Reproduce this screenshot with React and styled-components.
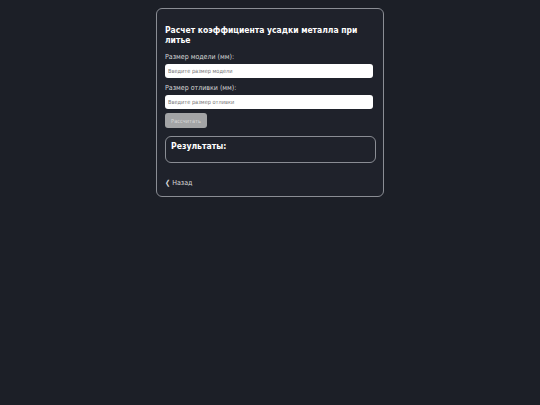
import React, { useState } from 'react';
import styled, { createGlobalStyle } from 'styled-components';

const GlobalStyle = createGlobalStyle`
  body {
    margin: 0;
    background: #1c1f27;
    font-family: "DejaVu Sans Condensed", "DejaVu Sans", sans-serif;
    color: #ffffff;
  }
`;

const Page = styled.div({
  'padding-top': '8px',
  'min-height': '405px',
  'box-sizing': 'border-box',
});

const Card = styled.div({
  'width': '228px',
  'margin': '0 auto',
  'box-sizing': 'border-box',
  'border': '1px solid #8a8d94',
  'border-radius': '6px',
  'background': '#1f222b',
  'padding': '16px 9px 7px 8px',
});

const Title = styled.h2({
  'font-size': '8.5px',
  'font-weight': 'bold',
  'line-height': '10px',
  'margin': '0 0 8px 0',
});

const Label = styled.label({
  'display': 'block',
  'font-size': '7px',
  'line-height': '8px',
  'margin-bottom': '3px',
  'color': '#d8d8d8',
});

const Input = styled.input({
  'display': 'block',
  'width': '208px',
  'height': '14px',
  'box-sizing': 'border-box',
  'border': 'none',
  'border-radius': '3px',
  'background': '#ffffff',
  'font-family': '"DejaVu Sans Condensed", sans-serif',
  'font-size': '5.6px',
  'padding': '0 3px',
  'margin-bottom': '6px',
  'outline': 'none',
  '&::placeholder': { 'color': '#777' },
});

const Button = styled.button({
  'display': 'block',
  'width': '42px',
  'height': '15px',
  'border': 'none',
  'border-radius': '3px',
  'background': '#a3a4a6',
  'color': '#d8d8d8',
  'font-family': '"DejaVu Sans Condensed", sans-serif',
  'font-size': '5.6px',
  'padding': '0',
  'margin-top': '-2px',
});

const Results = styled.div({
  'margin-top': '8px',
  'width': '211px',
  'height': '27px',
  'box-sizing': 'border-box',
  'border': '1px solid #8a8d94',
  'border-radius': '6px',
  'padding': '4px 5px',
});

const ResultsTitle = styled.h3({
  'font-size': '8.6px',
  'font-weight': 'bold',
  'line-height': '10px',
  'margin': '0',
});

const BackLink = styled.a({
  'display': 'inline-block',
  'margin-top': '16px',
  'font-size': '7px',
  'color': '#d8d8d8',
  'text-decoration': 'none',
});

export default function App() {
  const [model, setModel] = useState('');
  const [casting, setCasting] = useState('');
  return (
    <Page>
      <GlobalStyle />
      <Card>
        <Title>Расчет коэффициента усадки металла при литье</Title>
        <Label>Размер модели (мм):</Label>
        <Input placeholder="Введите размер модели" value={model} onChange={e => setModel(e.target.value)} />
        <Label>Размер отливки (мм):</Label>
        <Input placeholder="Введите размер отливки" value={casting} onChange={e => setCasting(e.target.value)} />
        <Button disabled={!model || !casting}>Рассчитать</Button>
        <Results>
          <ResultsTitle>Результаты:</ResultsTitle>
        </Results>
        <BackLink href="#">❮ Назад</BackLink>
      </Card>
    </Page>
  );
}
